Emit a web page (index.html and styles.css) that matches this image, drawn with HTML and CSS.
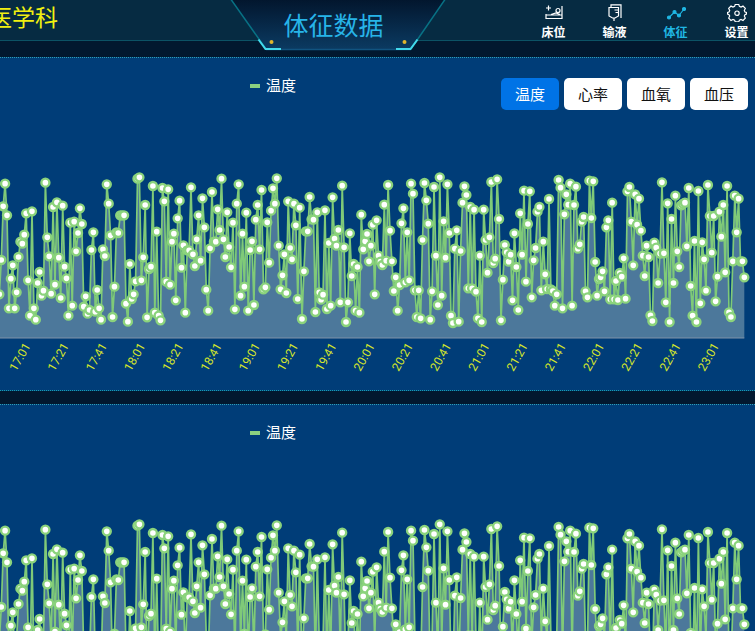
FILE: index.html
```html
<!DOCTYPE html>
<html lang="zh-CN">
<head>
<meta charset="utf-8">
<title>体征数据</title>
<link rel="stylesheet" href="styles.css">
</head>
<body>
<header class="topbar">
  <div class="dept">医学科</div>
  <div class="banner">
    <svg class="banner-bg" viewBox="0 0 216 54" aria-hidden="true">
      <defs><linearGradient id="bannerFill" x1="0" y1="0" x2="0" y2="1"><stop offset="0" stop-color="#02152c"/><stop offset="1" stop-color="#0b3a61"/></linearGradient></defs>
      <path d="M0-2 36 49H181L216-2z" fill="url(#bannerFill)"/>
      <path d="M0-2 36 49M181 49 216-2" fill="none" stroke="#087184" stroke-width="1.5"/>
      <path d="M36 49.500H181" stroke="#11537f" stroke-width="1.500"/>
      <path d="M28.500 39.500 35.500 49H51M166 49H180.500L187.500 39.500" fill="none" stroke="#43d9ec" stroke-width="2"/>
      <circle cx="41.500" cy="42" r="2" fill="#e0b52c"/><circle cx="174.500" cy="42" r="2" fill="#e0b52c"/>
    </svg>
    <h1>体征数据</h1>
  </div>
  <nav class="menu">
    <a href="#bed"><svg viewBox="0 0 20 18" aria-hidden="true"><path d="M4.500 1.500v5M2 4h5M2 10v5M2 14.500h16.500M2 11h16.500M18 2v13M7 10.500l5-1.500 4 1.500"/><circle cx="14" cy="6.500" r="2"/></svg>床位</a>
    <a href="#infusion"><svg viewBox="0 0 20 18" aria-hidden="true"><path d="M6 3V.800h10V14M4 3.500h9.500v8.500L10 14H7.500L4 12zM9 14v3M13.500 6h-4M13.500 8.500h-3"/></svg>输液</a>
    <a href="#vitals" class="active"><svg viewBox="0 0 20 18" aria-hidden="true"><path d="M3 13.500 8.500 8l4.500 3.500L18 5"/><g fill="currentColor"><circle cx="3" cy="13.500" r="1.500"/><circle cx="8.500" cy="8" r="1.500"/><circle cx="13" cy="11.500" r="1.500"/><circle cx="18" cy="5" r="1.500"/></g></svg>体征</a>
    <a href="#settings"><svg viewBox="0 0 20 18" aria-hidden="true"><path d="M8.300.400h3.400l.7 2 1.600.7 2-1 2.300 2.300-1 2 .7 1.600 1.400.5v1.500l-1.400.6-.7 1.500 1 2-2.300 2.400-2-1-1.600.7-.7 1.700H8.300l-.7-1.700-1.600-.7-2 1-2.300-2.400 1-2-.7-1.500L.600 10V8.500L2 8l.7-1.600-1-2L4 2.100l2 1 1.600-.7z"/><circle cx="10" cy="9.200" r="2.200"/></svg>设置</a>
  </nav>
</header>
<main>
  <section class="panel">
    <div class="legend"><span class="key"></span>温度</div>
    <div class="tabs">
      <button type="button" class="selected">温度</button>
      <button type="button">心率</button>
      <button type="button">血氧</button>
      <button type="button">血压</button>
    </div>
    <svg class="chart" viewBox="0 0 755 220" role="img" aria-label="温度"></svg>
  </section>
  <section class="panel">
    <div class="legend"><span class="key"></span>温度</div>
    <svg class="chart" viewBox="0 0 755 220" role="img" aria-label="温度"></svg>
  </section>
</main>
<script src="chart.js"></script>
</body>
</html>
```
FILE: styles.css
```css
* { box-sizing: border-box; }
body {
  margin: 0;
  background: #02182f;
  color: #fff;
  font-family: Roboto, "Noto Sans CJK SC", sans-serif;
  overflow: hidden;
}
.topbar {
  position: relative;
  display: flex;
  justify-content: space-between;
  height: 41px;
  background: #062b42;
  border-bottom: 1px solid #0c5265;
}
.dept {
  margin-left: -11px;
  color: #f1f010;
  font-size: 23px;
  line-height: 38px;
}
.banner {
  position: absolute;
  top: 0;
  left: 230px;
  width: 216px;
  height: 54px;
}
.banner-bg { position: absolute; inset: 0; width: 100%; height: 100%; }
.banner h1 {
  position: relative;
  margin: 0;
  padding-right: 9px;
  color: #27b4e8;
  font-size: 25px;
  font-weight: 400;
  line-height: 54px;
  text-align: center;
}
.menu {
  display: flex;
  margin-right: -12px;
}
.menu a {
  display: flex;
  flex-direction: column;
  align-items: center;
  width: 61px;
  padding-top: 4px;
  color: #fff;
  font-size: 12px;
  font-weight: 700;
  line-height: 22px;
  text-decoration: none;
}
.menu svg {
  width: 20px;
  height: 18px;
  flex: none;
  fill: none;
  stroke: currentColor;
  stroke-width: 1.2;
}
.menu .active { color: #20b7e4; }
.panel {
  position: relative;
  height: 334px;
  margin-top: 16px;
  padding-top: 17px;
  background: #003d78;
  border-top: 1px dotted #2fa0b4;
  border-bottom: 1px dotted #18a0ae;
}
.panel + .panel { margin-top: 13px; }
.legend {
  display: flex;
  align-items: center;
  gap: 6px;
  width: max-content;
  margin-left: 250px;
  font-size: 15px;
  line-height: 22px;
}
.key { width: 10px; height: 4px; background: #8bd180; }
.tabs {
  position: absolute;
  top: 20px;
  right: 7px;
  display: flex;
  gap: 5px;
}
.tabs button {
  width: 58px;
  height: 32px;
  padding: 0 0 2px;
  border: 0;
  border-radius: 5px;
  background: #fff;
  color: #111;
  font-family: inherit;
  font-size: 15px;
}
.tabs .selected { background: #0073e6; color: #fff; }
.chart { display: block; width: 100%; margin-top: 73px; }
.area { fill: #98b3be; fill-opacity: .5; }
.line { fill: none; stroke: #7fca78; stroke-width: 1.7; stroke-linejoin: round; }
.dot { fill: #fff; stroke: #8bd37c; stroke-width: 2.4; }
.axis { stroke: #7e93a8; stroke-width: 1; }
.tick { fill: #d5e52b; font-size: 12px; text-anchor: end; }
```
FILE: chart.js
```js
// Readings grouped by stretch of the time axis: [first x, last x, values], in thirds of a unit.
const stretches = [
  [-2, 447, [373,270,109,41,136,415,326,286,415,367,261,215,221,194,130,331,437,124,415,449,339,306,377,362,38,202,259,371,111,344,97,263,384,107,290,325,437,158,407,155,244,189,115,162,410,379,431,420,240,187,425,360,415,449,238,258,43,101,196,441,350,187,189,136,136,136,401,455,282,387,373,334,26,22,331,262,105,442,297]],
  [453, 899, [290,48,428,185,437,451,54,94,335,58,344,215,191,391,145,92,293,226,428,241,241,52,253,288,208,136,272,85,172,359,422,235,66,215,215,118,180,26,208,261,127,231,292,158,418,101,43,377,191,350,128,422,240,214,405,149,105,238,60,358,352,157,278,122,55,101,25,227,358,316,253,369,94,234,268,101,166,387,113]],
  [906, 1348, [447,304,184,184,81,148,149,426,127,367,389,374,121,417,219,407,82,206,227,180,397,47,232,456,397,190,318,282,422,291,428,134,238,214,192,274,227,164,373,151,257,275,285,104,272,45,182,274,363,322,422,345,160,115,337,187,331,41,71,361,441,361,445,210,39,91,161,449,364,51,257,405,22,377,154,263,43,189]],
  [1353, 1797, [437,459,236,181,455,243,98,49,75,355,111,355,119,365,445,257,456,119,210,308,202,36,279,266,28,147,451,329,225,247,275,254,391,190,291,420,130,254,62,335,162,64,382,271,234,125,111,361,215,313,357,87,358,363,407,373,30,53,415,133,73,104,41,407,105,50,236,223,155,141,364,382,32,144,34,276,377,327]],
  [1802, 2233, [322,304,364,172,151,388,98,388,333,390,309,320,265,386,64,51,155,286,73,164,86,182,257,318,227,261,436,453,218,233,339,251,37,250,397,100,456,147,339,77,244,291,106,101,98,229,54,348,437,213,456,63,400,217,268,362,45,138,248,138,394,320,125,200,105,307,48,427,441,274,77,187,86,274,274,322]]
];
const times = ["17:01","17:21","17:41","18:01","18:21","18:41","19:01","19:21","19:41","20:01","20:21","20:41","21:01","21:21","21:41","22:01","22:21","22:41","23:01"];
const baseline = 168;

const points = stretches.flatMap(([from, to, values]) =>
  values.map((v, i) => [(from + (to - from) * i / (values.length - 1)) / 3, v / 3]));

function add(parent, name, attrs, text) {
  const el = document.createElementNS("http://www.w3.org/2000/svg", name);
  for (const key in attrs) el.setAttribute(key, attrs[key]);
  if (text) el.textContent = text;
  parent.appendChild(el);
}

for (const chart of document.querySelectorAll(".chart")) {
  const path = "M" + points.map(p => p[0].toFixed(1) + " " + p[1].toFixed(1)).join("L");
  const last = points[points.length - 1][0];
  add(chart, "path", { class: "area", d: path + `L${last} ${baseline}L0 ${baseline}Z` });
  add(chart, "line", { class: "axis", x1: 0, x2: last, y1: baseline, y2: baseline });
  add(chart, "path", { class: "line", d: path });
  for (const [x, y] of points) add(chart, "circle", { class: "dot", cx: x, cy: y, r: 4 });
  times.forEach((t, i) => {
    const x = 31 + i * 38.25;
    add(chart, "text", { class: "tick", x: x, y: 176, transform: `rotate(-60 ${x} 176)` }, t);
  });
}
```
